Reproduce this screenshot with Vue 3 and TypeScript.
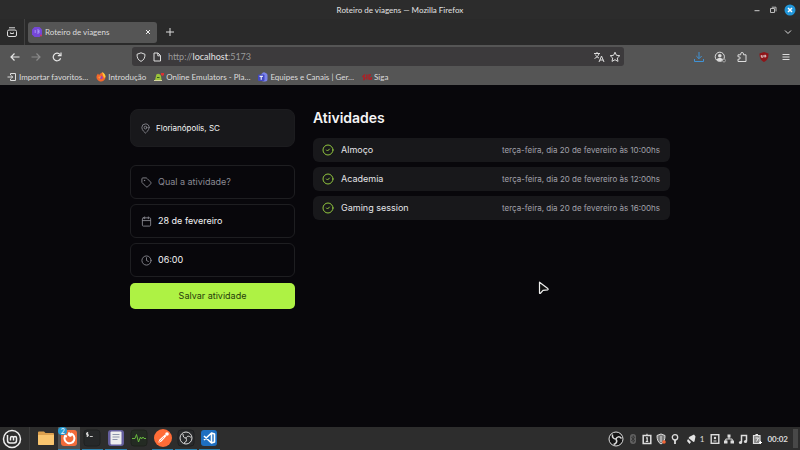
<script setup lang="ts">
import { ref } from 'vue'

interface Activity {
  name: string
  when: string
}

const place = ref('Florianópolis, SC')
const title = ref('')
const date = ref('28 de fevereiro')
const time = ref('06:00')
const address = ref('')

const activities = ref<Activity[]>([
  { name: 'Almoço', when: 'terça-feira, dia 20 de fevereiro às 10:00hs' },
  { name: 'Academia', when: 'terça-feira, dia 20 de fevereiro às 12:00hs' },
  { name: 'Gaming session', when: 'terça-feira, dia 20 de fevereiro às 16:00hs' },
])

function save(): void {
  if (!title.value.trim()) return
  activities.value.push({ name: title.value, when: `${date.value} às ${time.value}hs` })
  title.value = ''
}
</script>

<template>
  <div class="desktop">
    <header class="titlebar">
      <span class="window-title">Roteiro de viagens — Mozilla Firefox</span>
      <div class="window-buttons">
        <button aria-label="Minimizar"><svg width="10" height="10" viewBox="0 0 10 10"><path d="M2.5 5.7h5" stroke="#ccc" /></svg></button>
        <button aria-label="Restaurar"><svg width="10" height="10" viewBox="0 0 10 10" fill="none" stroke="#bbb"><path d="M2.5 3.5h4v4h-4zM3.8 2.2h4.2v4.2" /></svg></button>
        <button aria-label="Fechar"><svg width="12" height="12" viewBox="0 0 12 12"><circle cx="6" cy="6" r="5.5" fill="#2196d9" /><path d="M4 4l4 4M8 4l-4 4" stroke="#fff" stroke-width="1.5" /></svg></button>
      </div>
    </header>

    <div class="tabs">
      <button class="tool archive" aria-label="Exibir abas">
        <svg width="12" height="12" viewBox="0 0 12 12" fill="none" stroke="#ddd"><rect x="1.5" y="4" width="9" height="6.5" rx="1.5" /><path d="M3 1.800h6M4.500 6.500v1h3v-1" /></svg>
      </button>
      <div class="tab">
        <svg width="12" height="12" viewBox="0 0 12 12"><path d="M3.5 1h5L11 3.500v5L8.500 11h-5L1 8.500v-5z" fill="#7547d8" /><path d="M4.200 4v3M6 4h2v1.500H6.500M8 5.500V7H6" stroke="#b9b4ff" stroke-width=".7" fill="none" /><circle cx="10" cy="9.500" r="1" fill="#c93a68" /></svg>
        <span class="tab-title">Roteiro de viagens</span>
        <button class="close" aria-label="Fechar aba"><svg width="8" height="8" viewBox="0 0 8 8"><path d="M2 2l4 4M6 2l-4 4" stroke="#eee" /></svg></button>
      </div>
      <button class="tool" aria-label="Nova aba"><svg width="10" height="10" viewBox="0 0 10 10"><path d="M5 1v8M1 5h8" stroke="#ddd" /></svg></button>
      <button class="tool all-tabs" aria-label="Listar abas"><svg width="10" height="10" viewBox="0 0 10 10" fill="none"><path d="M2 3.500l3 3 3-3" stroke="#ddd" /></svg></button>
    </div>

    <nav class="navbar">
      <div class="history">
        <button class="tool" aria-label="Voltar"><svg width="12" height="12" viewBox="0 0 12 12" fill="none" stroke="#e6e6e6" stroke-width="1.200"><path d="M10.500 6H2M5.500 2.500L2 6l3.500 3.500" /></svg></button>
        <button class="tool" aria-label="Avançar"><svg width="12" height="12" viewBox="0 0 12 12" fill="none" stroke="#8b8b8b" stroke-width="1.200"><path d="M1.500 6H10M6.500 2.500L10 6 6.500 9.500" /></svg></button>
        <button class="tool" aria-label="Recarregar"><svg width="12" height="12" viewBox="0 0 12 12" fill="none" stroke="#e6e6e6" stroke-width="1.200"><path d="M9.600 7.200A3.800 3.800 0 1 1 9 3.700M10 1.500V4.700H6.800" /></svg></button>
      </div>
      <div class="urlbar">
        <svg width="10" height="10" viewBox="0 0 10 10" fill="none" stroke="#ddd"><path d="M5 .8L9 2.300C9 6 7.700 8.200 5 9.400 2.300 8.200 1 6 1 2.300z" /></svg>
        <svg width="10" height="10" viewBox="0 0 10 10" fill="none" stroke="#ddd"><path d="M2 1h4l2.500 2.500V9H2zM5.800 1v2.800h2.700" /></svg>
        <label class="url">
          <span class="url-text"><span>http://</span><b>localhost</b><span>:5173</span></span>
          <input v-model="address" type="text" aria-label="Endereço" />
        </label>
        <button class="tool small" aria-label="Traduzir"><svg width="12" height="12" viewBox="0 0 12 12" fill="none" stroke="#ddd"><path d="M1 2.500h6M4 1v1.500M6 2.500C5.500 5 3.500 6.500 1.500 7.500M2.300 3.500C3 5 4.500 6.500 6 7M6 11l2.500-6L11 11M7 9h3.200" /></svg></button>
        <button class="tool small" aria-label="Favoritar"><svg width="12" height="12" viewBox="0 0 12 12" fill="none" stroke="#ddd" stroke-linejoin="round"><path d="M6 1.200l1.400 3.100 3.400.4-2.500 2.300.7 3.400L6 8.700l-3 1.700.7-3.400L1.200 4.700l3.400-.4z" /></svg></button>
      </div>
      <div class="extensions">
        <button class="tool" aria-label="Downloads"><svg width="12" height="12" viewBox="0 0 12 12" fill="none" stroke="#4093d6"><path d="M6 1v6.500M3.300 5L6 7.700 8.700 5M1.500 8v2.500h9V8" /></svg></button>
        <button class="tool" aria-label="Conta"><svg width="12" height="12" viewBox="0 0 12 12"><circle cx="5.800" cy="5.800" r="4.600" fill="none" stroke="#ddd" /><circle cx="5.800" cy="4.800" r="1.800" fill="#ddd" /><path d="M2.500 8.500c1-2 5.600-2 6.600 0-1.500 2-5 2-6.600 0z" fill="#ddd" /><circle cx="10" cy="9.500" r="1.500" fill="#555" stroke="#bbb" stroke-width=".7" /></svg></button>
        <button class="tool" aria-label="Extensões"><svg width="12" height="12" viewBox="0 0 12 12" fill="none" stroke="#ddd" stroke-linejoin="round"><path d="M2 10.500V8.200h1a1.200 1.200 0 0 0 0-2.400H2V3.800h2.700v-.9a1.400 1.400 0 0 1 2.800 0v.9h2.500v6.700z" /></svg></button>
        <button class="tool" aria-label="uBlock Origin"><svg width="12" height="12" viewBox="0 0 12 12" fill="none"><path d="M6 1l4.500 1.500c0 4-.8 6.700-4.500 8.500C2.300 9.200 1.500 6.500 1.500 2.500z" fill="#8e1519" /><path d="M3.300 4v2.200h1.800V4M6.800 6.200a1.100 1.100 0 1 0 0-2.200z" stroke="#eee" stroke-width=".8" /></svg></button>
        <button class="tool" aria-label="Menu"><svg width="10" height="10" viewBox="0 0 10 10" stroke="#ddd"><path d="M1.500 2.500h7M1.500 5h7M1.500 7.500h7" /></svg></button>
      </div>
    </nav>

    <div class="bookmarks">
      <a href="#"><svg width="10" height="10" viewBox="0 0 10 10" fill="none" stroke="#ddd"><path d="M3.500 3V1.500h5v7h-5V7M.5 5h5M4 3.300L5.700 5 4 6.700" /></svg><span>Importar favoritos…</span></a>
      <a href="#"><svg width="10" height="10" viewBox="0 0 10 10"><path d="M5 1c2-1 4 1.500 4.500 4A4.500 4.500 0 1 1 1 3l1-1.500L3 3z" fill="#f4672a" /><path d="M6 0c2 1 3.500 2.500 3.500 5L8 6z" fill="#ffc83a" /><circle cx="5" cy="5.500" r="1.700" fill="#a03fae" /><path d="M2 5l3-1-1 3z" fill="#ff9a34" /></svg><span>Introdução</span></a>
      <a href="#"><svg width="10" height="10" viewBox="0 0 10 10"><path d="M1 8L2 4c0-3 4-3 5 0l.5 4z" fill="#9bc33b" /><path d="M0 8h8v1H0z" fill="#d6d7a1" /><path d="M3 5.500h2.500" stroke="#345d22" /><path d="M7 1h3v2l-1.500 1L7 3z" fill="#dd3030" /></svg><span>Online Emulators - Pla…</span></a>
      <a href="#"><svg width="10" height="10" viewBox="0 0 10 10"><rect x="3" y="1" width="6.500" height="8.500" rx="2.500" fill="#7b83eb" /><circle cx="6" cy="2" r="1.800" fill="#7b83eb" /><rect y="2.500" width="6.500" height="6.500" rx="1" fill="#4249c2" /><path d="M1.500 4.300h3.500M3.200 4.300v3.500" stroke="#fff" /></svg><span>Equipes e Canais | Ger…</span></a>
      <a href="#"><svg width="10" height="10" viewBox="0 0 10 10" fill="none"><path d="M3 2.500L1 4.500l2 1.500-1 1.500H1M4.800 2.500v5M9 3H7v4h2.300V5" stroke="#b01f25" stroke-width="1.400" /></svg><span>Siga</span></a>
    </div>

    <main class="page">
      <div class="content">
        <form class="planner" @submit.prevent="save">
          <label class="field place">
            <svg class="lucide" viewBox="0 0 24 24"><path d="M20 10c0 6-8 12-8 12s-8-6-8-12a8 8 0 0 1 16 0Z" /><circle cx="12" cy="10" r="3" /></svg>
            <input v-model="place" type="text" aria-label="Destino" />
          </label>
          <label class="field">
            <svg class="lucide" viewBox="0 0 24 24"><path d="M12.600 2.600A2 2 0 0 0 11.200 2H4a2 2 0 0 0-2 2v7.200a2 2 0 0 0 .6 1.400l8.700 8.700a2.400 2.400 0 0 0 3.400 0l6.600-6.600a2.400 2.400 0 0 0 0-3.400z" /><circle cx="7.500" cy="7.500" r=".5" /></svg>
            <input v-model="title" type="text" placeholder="Qual a atividade?" aria-label="Atividade" />
          </label>
          <label class="field">
            <svg class="lucide" viewBox="0 0 24 24"><rect x="3" y="4" width="18" height="18" rx="2" /><path d="M16 2v4M8 2v4M3 10h18" /></svg>
            <input v-model="date" type="text" aria-label="Data" />
          </label>
          <label class="field">
            <svg class="lucide" viewBox="0 0 24 24"><circle cx="12" cy="12" r="10" /><path d="M12 6v6l4 2" /></svg>
            <input v-model="time" type="text" aria-label="Horário" />
          </label>
          <button class="save" type="submit">Salvar atividade</button>
        </form>

        <section class="agenda">
          <h1>Atividades</h1>
          <ul>
            <li v-for="item in activities" :key="item.name">
              <svg class="check" viewBox="0 0 24 24"><circle cx="12" cy="12" r="10" /><path d="M9 12l2 2 4-4" /></svg>
              <span class="name">{{ item.name }}</span>
              <span class="when">{{ item.when }}</span>
            </li>
          </ul>
        </section>
      </div>
    </main>

    <footer class="taskbar">
      <button class="mint" aria-label="Menu do sistema"><svg width="20" height="20" viewBox="0 0 20 20" fill="none"><circle cx="10" cy="10" r="8.500" stroke="#eee" stroke-width="1.500" /><path d="M5.500 6v5.500a2.500 2.500 0 0 0 2.500 2.500h4a2.500 2.500 0 0 0 2.500-2.500V9a1.500 1.500 0 0 0-3 0v2.500M11.500 9a1.500 1.500 0 0 0-3 0v2.500" stroke="#eee" stroke-width="1.500" /></svg></button>
      <div class="apps">
        <button aria-label="Arquivos"><svg width="20" height="20" viewBox="0 0 20 20"><path d="M2 4.500a1 1 0 0 1 1-1h5l1.500 1.500H17a1 1 0 0 1 1 1V16a1 1 0 0 1-1 1H3a1 1 0 0 1-1-1z" fill="#dca04e" /><path d="M2 7h16v9a1 1 0 0 1-1 1H3a1 1 0 0 1-1-1z" fill="#f9c56f" /></svg></button>
        <button class="active" aria-label="Firefox"><svg width="20" height="20" viewBox="0 0 20 20"><rect x="2" y="2" width="16" height="16" rx="3" fill="#f26b3a" /><path d="M12 5.500a5 5 0 1 1-6 2.500l2 .5" fill="none" stroke="#fff" stroke-width="2" /><path d="M9.500 4c2 .5 3.500 2 3.500 4l-2 1-2.500-2z" fill="#fff" /></svg><span class="badge">2</span></button>
        <button class="open" aria-label="Terminal"><svg width="20" height="20" viewBox="0 0 20 20"><rect x="2" y="2" width="16" height="16" rx="3" fill="#262829" stroke="#1e2021" /><path d="M6.300 5H4.500v1.500h1.800V8H4.500M5.400 4v5M7.800 8.500h3" stroke="#ddd" stroke-width=".9" fill="none" /></svg></button>
        <button class="open" aria-label="Editor de texto"><svg width="20" height="20" viewBox="0 0 20 20"><rect x="2" y="2" width="16" height="16" rx="3" fill="#645e9d" /><rect x="4.500" y="3.500" width="11" height="13" rx="1" fill="#eee" /><path d="M6.500 6.500h7M6.500 9h7M6.500 11.500h5" stroke="#8e96ad" /></svg></button>
        <button aria-label="Monitor do sistema"><svg width="20" height="20" viewBox="0 0 20 20"><rect x="2" y="2" width="16" height="16" rx="3" fill="#242b23" stroke="#1e221d" /><path d="M3 10.500h3l1.500-4 2 7.500 2-5 1 2 1.500-2 1 1.500h2" fill="none" stroke="#67b83e" /></svg></button>
        <button class="open" aria-label="Postman"><svg width="20" height="20" viewBox="0 0 20 20"><circle cx="10" cy="10" r="9" fill="#ff6c37" /><path d="M5 15l1.500-3.500L12 6.500l1.500 1.500-5 5.500z" fill="#fff" /><path d="M5 15l6-6" stroke="#ff6c37" stroke-width=".6" /><circle cx="14" cy="6" r="1.800" fill="#fff" /></svg></button>
        <button class="open" aria-label="OBS Studio"><svg width="20" height="20" viewBox="0 0 20 20"><rect x="2" y="2" width="16" height="16" rx="3" fill="#292a2c" stroke="#1e1f20" /><g fill="none" stroke="#ddd"><circle cx="10" cy="10" r="6" /><path d="M7 6c0 3 1 4 3 4 1-2 3-2.500 5-.5M10 10c1 2 .5 4-2 5" /></g></svg></button>
        <button class="open" aria-label="Visual Studio Code"><svg width="20" height="20" viewBox="0 0 20 20"><rect x="2" y="2" width="16" height="16" rx="3" fill="#1e6fc1" /><path d="M12.500 5l3 1v8l-3 1L5 8M12.500 15V5L5 12" fill="none" stroke="#fff" stroke-width="1.600" stroke-linejoin="round" /></svg></button>
      </div>
      <div class="tray">
        <svg width="16" height="16" viewBox="0 0 16 16"><circle cx="8" cy="8" r="7" fill="#151515" stroke="#ddd" /><path d="M4.500 3.500c-.5 3 1 4.500 3.500 4.500 1-2.500 3.500-3 5.500-.5M8 8c1.500 2.500.5 4.500-2.500 5.500" fill="none" stroke="#ddd" stroke-width="1.500" /></svg>
        <svg width="10" height="12" viewBox="0 0 10 12"><rect x="2" y="1" width="6" height="10" rx="3" fill="#626262" /><path d="M3.200 4l3.600 3.600L5 9.300V2.700l1.800 1.700L3.200 8" fill="none" stroke="#2d2d2d" stroke-width=".8" /></svg>
        <svg width="10" height="12" viewBox="0 0 10 12" fill="none"><path d="M1.200 2.500h7.600v8H1.200z" stroke="#ddd" stroke-width="1.500" /><path d="M5 .8v1.500M4 4.800h1.200V8.500M3.800 8.500h2.400" stroke="#ddd" stroke-width="1.200" /></svg>
        <svg width="10" height="12" viewBox="0 0 10 12"><path d="M5 1l4 1.500c0 4-1 7-4 8.500-3-1.500-4-4.500-4-8.500z" fill="#777" stroke="#ddd" /><path d="M5 3v6" stroke="#ddd" /><circle cx="8" cy="9" r="1.800" fill="#f26435" /></svg>
        <svg width="10" height="12" viewBox="0 0 10 12"><circle cx="5" cy="4.300" r="2.700" fill="none" stroke="#ddd" stroke-width="1.300" /><path d="M5 7v4" stroke="#ddd" stroke-width="1.800" /></svg>
        <div class="notice"><svg width="10" height="12" viewBox="0 0 10 12"><path d="M8 1.500l1.500 2-1 5-1 .5-5-4 1-1.200zM2 6l3 3-1.500 2L1 8z" fill="#e4e4e4" /></svg><span>1</span></div>
        <svg width="10" height="12" viewBox="0 0 10 12"><rect x="1.200" y="1.700" width="7.600" height="8.600" fill="none" stroke="#ddd" stroke-width="1.400" /><circle cx="5" cy="5" r="1.200" fill="#ddd" /><path d="M3.500 8h3" stroke="#ddd" /></svg>
        <svg width="10" height="12" viewBox="0 0 10 12"><path d="M3.500 1.500h3v3h-3zM0 7.500h3.500v3H0zM6.500 7.500H10v3H6.500z" fill="#ddd" /><path d="M5 4v2M1.800 8V6h6.400v2" fill="none" stroke="#ddd" /></svg>
        <svg width="10" height="12" viewBox="0 0 10 12"><path d="M3.500 9V2.500h5V8" fill="none" stroke="#ddd" stroke-width="1.500" /><circle cx="2.500" cy="9.500" r="1.600" fill="#ddd" /><circle cx="7.500" cy="8.500" r="1.600" fill="#ddd" /></svg>
        <svg width="10" height="12" viewBox="0 0 10 12"><path d="M1.500 2.500h6.500v8H1.500z" fill="#888" stroke="#ddd" stroke-width="1.200" /><path d="M3.500 1.500h2.500M3.500 5h3L4.500 8.500" stroke="#eee" fill="none" /><path d="M7 9.500h3M8.500 8v3" stroke="#fff" /></svg>
        <time>00:02</time>
        <button class="show-desktop" aria-label="Mostrar área de trabalho"></button>
      </div>
    </footer>

    <svg class="cursor" width="12" height="14" viewBox="0 0 12 14"><path d="M1.500 1.200v10.800q.3 1 1.200 0L5 9.400l4.800-.6q.8-.5 0-1.200z" fill="#111" stroke="#eee" stroke-width="1.200" stroke-linejoin="round" /></svg>
  </div>
</template>

<style>
body {
  background: #08070b;
}
</style>

<style scoped>
.desktop {
  position: relative;
  display: flex;
  flex-direction: column;
  min-height: 100vh;
  font-family: Lato, "Open Sans", sans-serif;
  font-size: 8px;
  line-height: 10px;
  color: #ddd;
}
* {
  box-sizing: border-box;
}
svg {
  display: block;
  flex-shrink: 0;
}
button {
  display: flex;
  align-items: center;
  justify-content: center;
  padding: 0;
  border: 0;
  background: none;
  color: inherit;
  font: inherit;
}
input {
  min-width: 0;
  padding: 0;
  border: 0;
  outline: 0;
  background: none;
  color: inherit;
  font: inherit;
}

.titlebar {
  display: grid;
  grid-template-columns: 1fr auto 1fr;
  align-items: center;
  height: 19px;
  background: #2c2c2c;
}
.window-title {
  grid-column: 2;
  font-weight: 500;
}
.window-buttons {
  display: flex;
  align-items: center;
  justify-content: flex-end;
  gap: 6px;
  padding-right: 4px;
}

.tabs {
  display: flex;
  align-items: center;
  height: 26px;
  background: #2a2a2a;
}
.tool {
  width: 21px;
  height: 20px;
}
.archive {
  width: 25px;
  height: 26px;
  border-right: 1px solid #414141;
}
.tab {
  display: flex;
  align-items: center;
  gap: 2px;
  width: 129px;
  height: 21px;
  margin: 0 2px 0 3px;
  padding: 0 5px 0 3px;
  border-radius: 3px;
  background: #555;
}
.tab-title {
  flex: 1;
}
.all-tabs {
  margin-left: auto;
  margin-right: 2px;
}

.navbar {
  display: flex;
  align-items: center;
  height: 22px;
  margin-top: 0;
  padding: 1px 4px 0;
  background: #555;
}
.history {
  display: flex;
  width: 128px;
}
.urlbar {
  flex: 1;
  display: flex;
  align-items: center;
  gap: 6px;
  height: 19px;
  padding: 0 4px;
  border-radius: 3px;
  background: #3c3a3c;
}
.url {
  flex: 1;
  display: flex;
  color: #999;
  font-size: 9px;
}
.url input {
  flex: 1;
}
.url b {
  color: #e4e4e4;
  font-weight: 400;
}
.small {
  width: 10px;
}
.extensions {
  display: flex;
  justify-content: space-between;
  width: 108px;
  margin-left: 64px;
}

.bookmarks {
  display: flex;
  align-items: center;
  gap: 8px;
  height: 18px;
  padding: 1px 7px 0;
  background: #555;
}
.bookmarks a {
  display: flex;
  align-items: center;
  gap: 2px;
  color: #ddd;
  text-decoration: none;
  white-space: nowrap;
}

.page {
  flex: 1;
  padding: 24px;
  background: #08070b;
  font-family: Inter, "Liberation Sans", sans-serif;
}
.content {
  display: grid;
  grid-template-columns: 165px 1fr;
  gap: 18px;
  max-width: 540px;
  margin: 0 auto;
}
.planner {
  display: flex;
  flex-direction: column;
  gap: 5px;
}
.field {
  display: flex;
  align-items: center;
  gap: 6px;
  height: 34px;
  padding: 0 10px;
  border: 1px solid #1e1e21;
  border-radius: 6px;
  color: #f4f4f5;
  font-size: 9px;
  line-height: 14px;
}
.field input {
  flex: 1;
}
.field input::placeholder {
  color: #8a8a93;
  opacity: 1;
}
.place {
  height: 38px;
  margin-bottom: 13px;
  gap: 5px;
  padding: 0 9px;
  border-color: #1c1c1f;
  border-radius: 8px;
  background: #18181b;
  font-size: 8px;
}
.lucide,
.check {
  width: 11px;
  height: 11px;
  fill: none;
  stroke: #85858d;
  stroke-width: 2;
  stroke-linecap: round;
  stroke-linejoin: round;
}
.save {
  height: 26px;
  margin-top: 1px;
  border-radius: 5px;
  background: #aef244;
  color: #263b0b;
  font-size: 9px;
  line-height: 14px;
}
h1 {
  margin: 0 0 12px;
  color: #f4f4f5;
  font-size: 14px;
  font-weight: 600;
  line-height: 17px;
}
ul {
  display: grid;
  gap: 5px;
  margin: 0;
  padding: 0;
  list-style: none;
}
li {
  display: flex;
  align-items: center;
  gap: 7px;
  height: 24px;
  padding: 0 10px 0 9px;
  border-radius: 6px;
  background: #18181b;
}
.check {
  width: 12px;
  height: 12px;
  stroke: #92c73f;
}
.name {
  color: #e4e4e7;
  font-size: 9px;
}
.when {
  margin-left: auto;
  color: #a1a1aa;
  font-size: 8px;
}

.taskbar {
  display: flex;
  align-items: stretch;
  justify-content: space-between;
  height: 23px;
  background: #2d2d2d;
}
.mint {
  width: 30px;
  padding-right: 6px;
  border-right: 1px solid #3b3b3b;
}
.apps {
  display: grid;
  grid-template-columns: repeat(8, 1fr);
  gap: 2px;
  width: 190px;
  padding-left: 5px;
}
.apps button {
  position: relative;
  border-bottom: 1px solid transparent;
}
.apps .open {
  border-color: #2b80ad;
}
.apps .active {
  border-color: #2b80ad;
  background: #505050;
}
.badge {
  position: absolute;
  top: 0;
  left: 0;
  width: 9px;
  height: 8px;
  border-radius: 4px;
  background: #269bd3;
  color: #fff;
  font-size: 7px;
  line-height: 8px;
}
.tray {
  display: flex;
  align-items: center;
  gap: 4px;
  margin-left: auto;
  padding-right: 2px;
}
.notice {
  display: flex;
  align-items: center;
  gap: 4px;
  margin: 0 2px;
}
.tray time {
  margin: 0 1px;
  font-weight: 700;
}
.show-desktop {
  width: 5px;
  height: 19px;
  background: #484848;
}
.cursor {
  position: absolute;
  left: 538px;
  top: 281px;
}
</style>
